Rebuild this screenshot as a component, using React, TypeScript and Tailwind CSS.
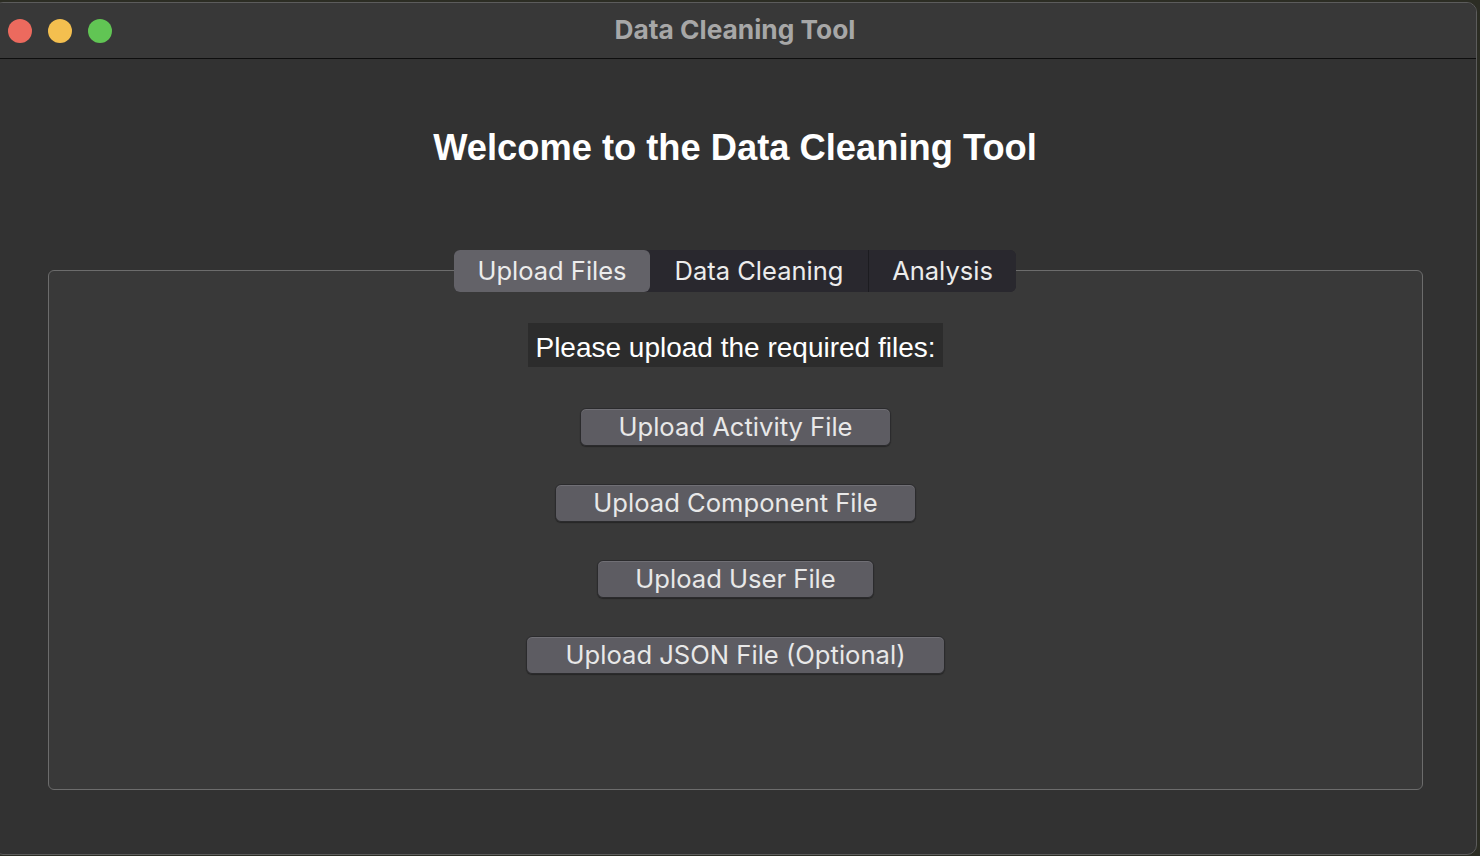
import React from "react";

const sf = { fontFamily: "Inter, 'Noto Sans', sans-serif" };

function Tab({ label, w, active, last }: { label: string; w: string; active?: boolean; last?: boolean }) {
  return (
    <div
      className={
        "h-full flex items-center justify-center text-[25.5px] text-[#ececec] " +
        w +
        (active ? " bg-[#636268] rounded-[6px]" : " bg-[#29282e]") +
        (!active && !last ? " border-r border-[#1c1c20]" : "") +
        (last ? " rounded-r-[6px]" : "")
      }
      style={sf}
    >
      {label}
    </div>
  );
}

function UploadButton({ label, w }: { label: string; w: string }) {
  return (
    <button
      className={
        "h-[38px] rounded-[6px] bg-[#5d5c62] border border-[#2b2b2d] shadow-[inset_0_1px_0_rgba(255,255,255,0.12),0_1px_1px_rgba(0,0,0,0.35)] flex items-center justify-center text-[25.6px] text-[#e8e8e8] " +
        w
      }
      style={sf}
    >
      {label}
    </button>
  );
}

export default function App() {
  return (
    <div className="w-[1480px] h-[856px] overflow-hidden bg-[#2c2d24] flex">
      <div className="ml-[-7px] mt-[2px] w-[1484px] h-[853px] shrink-0 rounded-[10px] bg-[#323232] border border-[#5c5c5c] flex flex-col overflow-hidden">
        {/* title bar */}
        <div className="h-[56px] shrink-0 bg-[#383838] border-b border-[#0e0e0e] grid grid-cols-[1fr_auto_1fr] items-center">
          <div className="flex items-center gap-[16px] pl-[14px]">
            <div className="w-[24px] h-[24px] rounded-full bg-[#ec6a5e]" />
            <div className="w-[24px] h-[24px] rounded-full bg-[#f4bf4f]" />
            <div className="w-[24px] h-[24px] rounded-full bg-[#61c554]" />
          </div>
          <div className="text-[26.3px] font-bold text-[#a7a7a7] mt-[-2px]" style={sf}>
            Data Cleaning Tool
          </div>
          <div />
        </div>

        {/* body */}
        <div className="flex-1 flex flex-col items-center">
          <h1
            className="mt-[71px] text-[36.3px] leading-[36px] font-bold text-white"
            style={{ fontFamily: "'Liberation Sans', Arial, sans-serif" }}
          >
            Welcome to the Data Cleaning Tool
          </h1>

          <div className="mt-[84px] w-full flex flex-col items-center">
            <div className="relative z-10 h-[42px] flex rounded-[6px] bg-[#29282e] mb-[-22px]">
              <Tab label="Upload Files" w="w-[196px]" active />
              <Tab label="Data Cleaning" w="w-[219px]" />
              <Tab label="Analysis" w="w-[147px]" last />
            </div>
            <div className="self-stretch ml-[54px] mr-[53px] h-[520px] rounded-[6px] border border-[#6c6c6c] bg-[#393939] flex flex-col items-center pt-[52px]">
              <div
                className="h-[44px] px-[7px] pt-[6px] bg-[#2c2c2c] text-[28px] leading-[38px] text-white"
                style={{ fontFamily: "'Liberation Sans', Arial, sans-serif" }}
              >
                Please upload the required files:
              </div>
              <div className="mt-[41px] flex flex-col items-center gap-[38px]">
                <UploadButton label="Upload Activity File" w="w-[311px]" />
                <UploadButton label="Upload Component File" w="w-[361px]" />
                <UploadButton label="Upload User File" w="w-[277px]" />
                <UploadButton label="Upload JSON File (Optional)" w="w-[419px]" />
              </div>
            </div>
          </div>
        </div>
      </div>
    </div>
  );
}
